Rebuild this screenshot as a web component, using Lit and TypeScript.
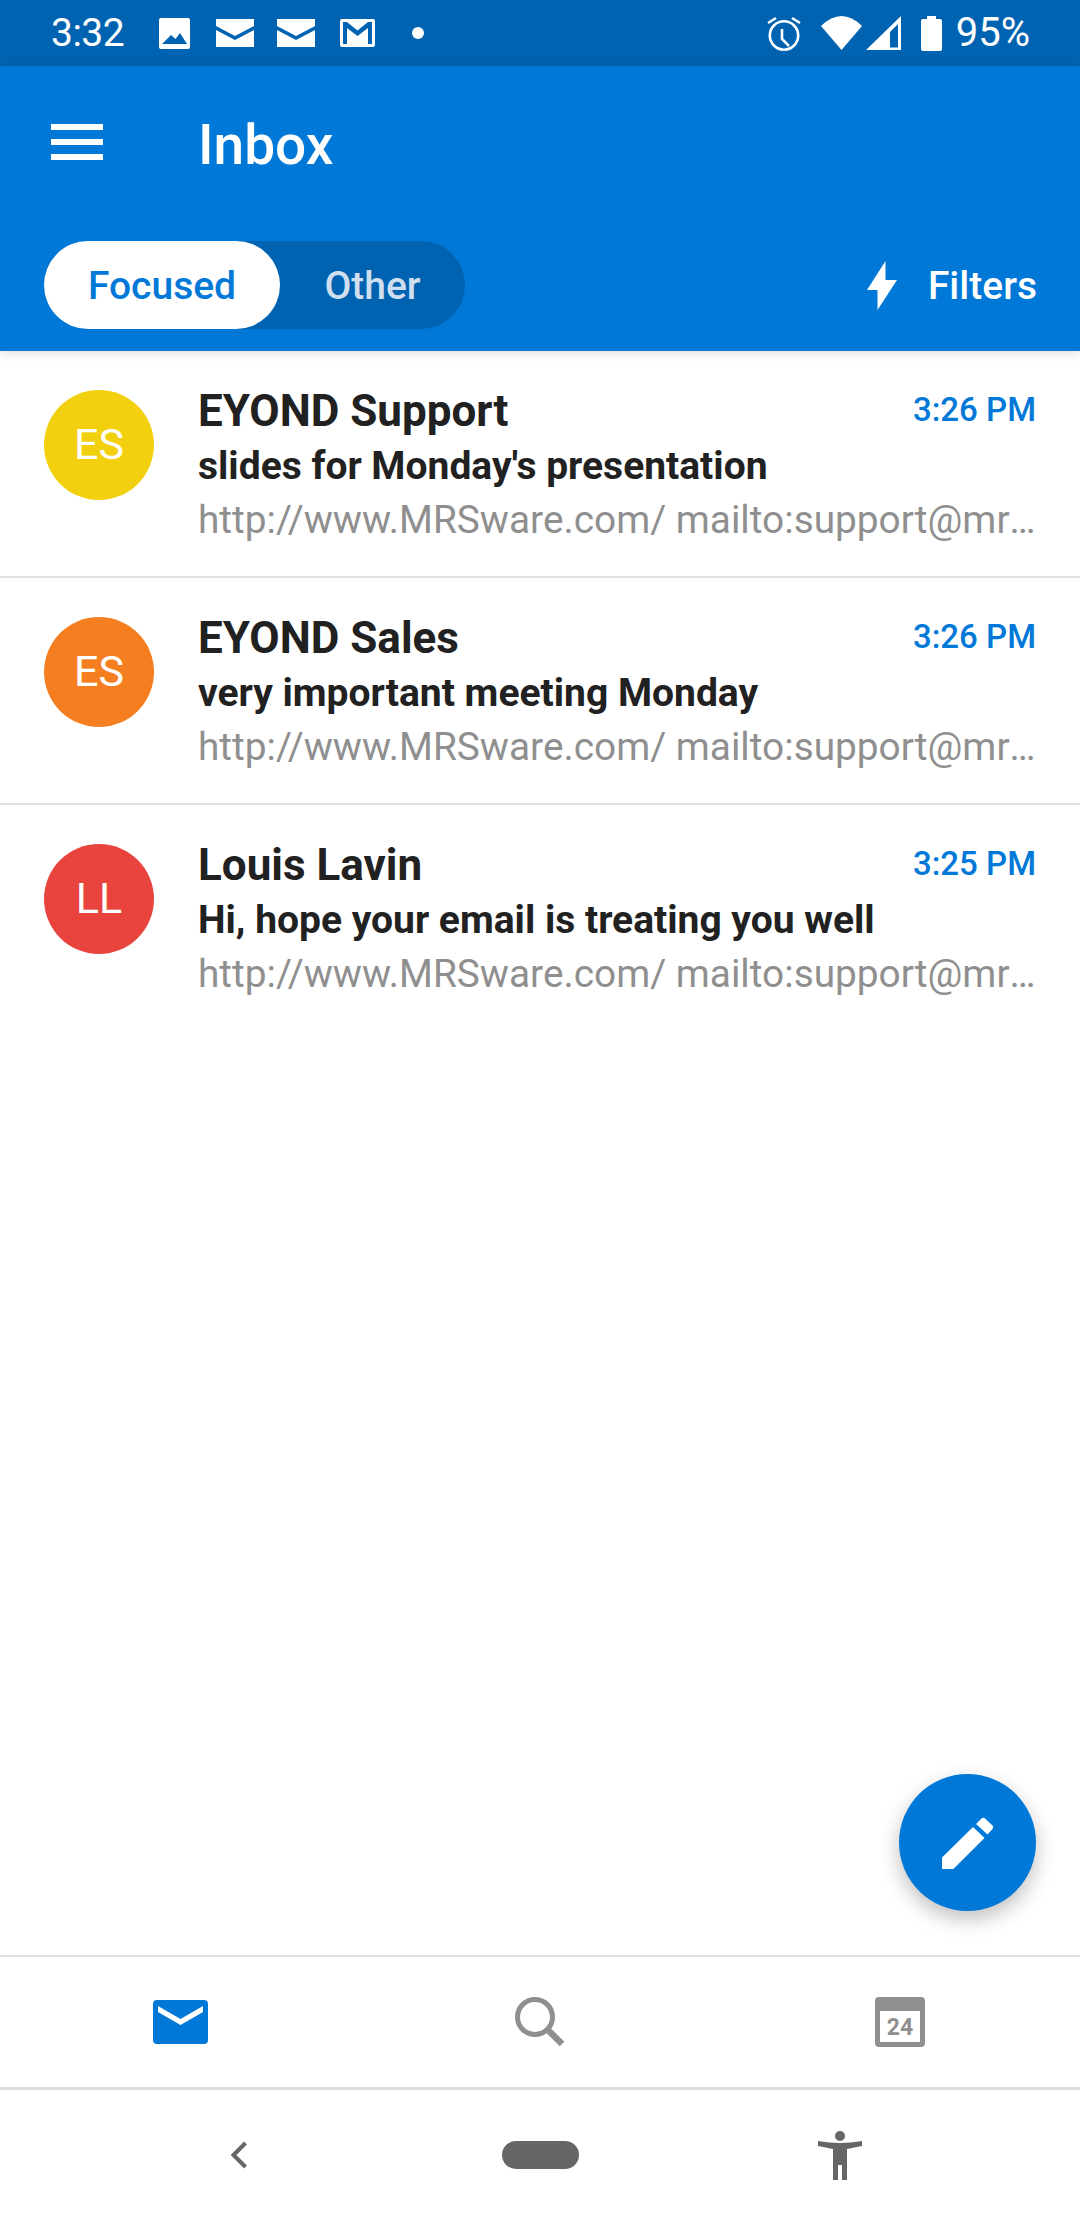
import { LitElement, html, css, svg } from 'lit';
import { customElement } from 'lit/decorators.js';

const mailGlyph = svg`<path fill-rule="evenodd" d="M0 0H38V7L19 17 0 7ZM0 11 19 21 38 11V28H0Z"/>`;

const messages = [
  { initials: 'ES', color: '#f2d00d', sender: 'EYOND Support', time: '3:26 PM', subject: "slides for Monday's presentation" },
  { initials: 'ES', color: '#f57f20', sender: 'EYOND Sales', time: '3:26 PM', subject: 'very important meeting Monday' },
  { initials: 'LL', color: '#e8443d', sender: 'Louis Lavin', time: '3:25 PM', subject: 'Hi, hope your email is treating you well' },
];

const preview = 'http://www.MRSware.com/ mailto:support@mrsware.com';

@customElement('app-root')
export class AppRoot extends LitElement {
  static styles = css`
    :host {
      display: flex;
      flex-direction: column;
      width: 1080px;
      height: 2220px;
      background: #fff;
      font-family: Roboto, sans-serif;
      overflow: hidden;
    }
    svg { display: block; flex: none; }

    .status {
      height: 66px;
      flex: none;
      display: flex;
      align-items: center;
      padding: 0 50px 0 51px;
      background: #0063b1;
      color: #fff;
      fill: #fff;
    }
    .status-time { font-size: 39px; width: 73px; line-height: 66px; letter-spacing: -0.5px; }
    .status-pic { margin-left: 35px; }
    .status-mail { margin-left: 26px; }
    .status-mail2 { margin-left: 23px; }
    .status-gmail { margin-left: 25px; }
    .status-dot { margin-left: 37px; }
    .status-alarm { margin-left: auto; }
    .status-wifi { margin-left: 19px; }
    .status-signal { margin-left: 4px; }
    .status-battery { margin-left: 20px; }
    .status-pct { margin-left: 14px; font-size: 40px; line-height: 66px; }

    .header {
      height: 285px;
      flex: none;
      display: flex;
      flex-direction: column;
      background: #0078d7;
      color: #fff;
      fill: #fff;
      box-shadow: 0 2px 10px rgba(0, 0, 0, 0.14);
      position: relative;
      z-index: 1;
    }
    .title-row {
      height: 175px;
      display: flex;
      align-items: flex-start;
      padding-left: 51px;
    }
    .menu { margin-top: 58px; }
    .title {
      margin: 43px 0 0 95px;
      font-size: 55px;
      font-weight: 500;
      line-height: 72px;
    }
    .tabs-row {
      display: flex;
      align-items: center;
      justify-content: space-between;
      padding: 0 43px 0 44px;
    }
    .tabs {
      width: 421px;
      height: 88px;
      display: flex;
      background: #0063b1;
      border-radius: 44px;
      font-size: 39px;
      font-weight: 500;
      line-height: 90px;
    }
    .tab-active {
      width: 236px;
      text-align: center;
      background: #fff;
      color: #0078d7;
      border-radius: 44px;
    }
    .tab-other { flex: 1; text-align: center; color: #cfdff0; }
    .filters {
      display: flex;
      align-items: center;
      gap: 31px;
      font-size: 39px;
      font-weight: 500;
      line-height: 54px;
    }
    .filters span { padding-top: 2px; }

    .list { flex: 1; position: relative; min-height: 0; }
    .row {
      height: 227px;
      box-sizing: border-box;
      display: flex;
      padding: 39px 44px 0;
      border-bottom: 2px solid #e1e1e1;
    }
    .row.last { border-bottom: none; }
    .avatar {
      width: 110px;
      height: 110px;
      flex: none;
      box-sizing: border-box;
      padding-bottom: 2px;
      border-radius: 50%;
      display: flex;
      align-items: center;
      justify-content: center;
      color: #fff;
      font-size: 43px;
      font-weight: 400;
    }
    .body { flex: 1; min-width: 0; margin-left: 44px; margin-top: -7px; }
    .top { display: flex; justify-content: space-between; align-items: center; height: 56px; }
    .sender { font-size: 44px; font-weight: 700; color: #212121; }
    .time { font-size: 33px; font-weight: 500; color: #0078d7; margin-bottom: 4px; }
    .subject { font-size: 39px; font-weight: 700; color: #212121; line-height: 54px; }
    .preview {
      font-size: 38.8px;
      color: #8f8f8f;
      line-height: 54px;
      white-space: nowrap;
      overflow: hidden;
      text-overflow: ellipsis;
    }
    .fab {
      position: absolute;
      right: 44px;
      bottom: 44px;
      width: 137px;
      height: 137px;
      border-radius: 50%;
      background: #0078d7;
      fill: #fff;
      display: flex;
      align-items: center;
      justify-content: center;
      box-shadow: 0 8px 20px rgba(0, 0, 0, 0.25);
    }

    .tabbar {
      height: 132px;
      flex: none;
      box-sizing: border-box;
      display: grid;
      grid-template-columns: repeat(3, 1fr);
      place-items: center;
      border-top: 2px solid #e1e1e1;
      fill: #8f8f8f;
    }
    .tab-mail { fill: #0078d7; }
    .navbar {
      height: 133px;
      flex: none;
      box-sizing: border-box;
      display: grid;
      grid-template-columns: repeat(3, 300px);
      padding: 0 90px;
      place-items: center;
      border-top: 3px solid #dedede;
      fill: #666;
    }
    .back { margin-right: 2px; }
    .home { width: 77px; height: 28px; border-radius: 14px; background: #666; }
  `;

  renderStatus() {
    return html`
      <div class="status">
        <span class="status-time">3:32</span>
        <svg class="status-pic" width="31" height="31" viewBox="0 0 31 31"><path fill-rule="evenodd" d="M2 0H29A2 2 0 0 1 31 2V29A2 2 0 0 1 29 31H2A2 2 0 0 1 0 29V2A2 2 0 0 1 2 0ZM3 26H28L21 15 16.500 21 12 17Z"/></svg>
        <svg class="status-mail" width="38" height="28" viewBox="0 0 38 28">${mailGlyph}</svg>
        <svg class="status-mail2" width="38" height="28" viewBox="0 0 38 28">${mailGlyph}</svg>
        <svg class="status-gmail" width="35" height="28" viewBox="0 0 35 28"><path fill-rule="evenodd" d="M2 0H33A2 2 0 0 1 35 2V26A2 2 0 0 1 33 28H2A2 2 0 0 1 0 26V2A2 2 0 0 1 2 0ZM7 3H3V25H7V9L17.500 17 28 9V25H32V3H28L17.500 11.500Z"/></svg>
        <svg class="status-dot" width="12" height="12" viewBox="0 0 12 12"><circle cx="6" cy="6" r="6"/></svg>
        <svg class="status-alarm" width="35" height="35" viewBox="0 0 35 35">
          <circle cx="17" cy="19.500" r="14.200" fill="none" stroke="#fff" stroke-width="2.600"/>
          <path d="M15 13V23L22 30M1 7 9 2M33 7 25 2" fill="none" stroke="#fff" stroke-width="2.600"/>
        </svg>
        <svg class="status-wifi" width="41" height="34" viewBox="0 0 41 34"><path d="M0 10Q20.500-10 41 10L20.500 34Z"/></svg>
        <svg class="status-signal" width="35" height="34" viewBox="0 0 35 34"><path fill-rule="evenodd" d="M35 0V34H0ZM24 16V31.500H32V8Z"/></svg>
        <svg class="status-battery" width="21" height="35" viewBox="0 0 21 35"><path d="M6 0H15V3H19A2 2 0 0 1 21 5V33A2 2 0 0 1 19 35H2A2 2 0 0 1 0 33V5A2 2 0 0 1 2 3H6Z"/></svg>
        <span class="status-pct">95%</span>
      </div>
    `;
  }

  renderHeader() {
    return html`
      <div class="header">
        <div class="title-row">
          <svg class="menu" width="52" height="36" viewBox="0 0 52 36"><path d="M0 0H52V6H0ZM0 15H52V21H0ZM0 30H52V36H0Z"/></svg>
          <span class="title">Inbox</span>
        </div>
        <div class="tabs-row">
          <div class="tabs">
            <div class="tab-active">Focused</div>
            <div class="tab-other">Other</div>
          </div>
          <div class="filters">
            <svg width="30" height="49" viewBox="0 0 30 49"><path d="M18.500 0 0 29H10.500V49L30 19H18.500Z"/></svg>
            <span>Filters</span>
          </div>
        </div>
      </div>
    `;
  }

  renderTabbar() {
    return html`
      <div class="tabbar">
        <svg class="tab-mail" width="55" height="44" viewBox="0 0 55 44"><path fill-rule="evenodd" d="M4 0H51A4 4 0 0 1 55 4V40A4 4 0 0 1 51 44H4A4 4 0 0 1 0 40V4A4 4 0 0 1 4 0ZM5 6V12L27.500 25 50 12V6L27.500 19Z"/></svg>
        <svg width="50" height="50" viewBox="0 0 50 50">
          <circle cx="20" cy="20" r="17.500" fill="none" stroke="#8f8f8f" stroke-width="5"/>
          <path d="M31 31 47 47" stroke="#8f8f8f" stroke-width="6.500"/>
        </svg>
        <svg width="50" height="50" viewBox="0 0 50 50">
          <path fill-rule="evenodd" d="M4 0H46A4 4 0 0 1 50 4V46A4 4 0 0 1 46 50H4A4 4 0 0 1 0 46V4A4 4 0 0 1 4 0ZM5 14V45H45V14Z"/>
          <text x="25" y="38" text-anchor="middle" font-family="Roboto" font-weight="700" font-size="23">24</text>
        </svg>
      </div>
    `;
  }

  renderNavbar() {
    return html`
      <div class="navbar">
        <svg class="back" width="18" height="28" viewBox="0 0 18 28"><path d="M15.500 2 3.500 14 15.500 26" fill="none" stroke="#666" stroke-width="4"/></svg>
        <div class="home"></div>
        <svg width="44" height="49" viewBox="0 0 44 49">
          <circle cx="22" cy="5" r="5"/>
          <path d="M0 10Q22 14 44 10V15L29 18V49H24V34H20V49H15V18L0 15Z"/>
        </svg>
      </div>
    `;
  }

  render() {
    return html`
      ${this.renderStatus()}
      ${this.renderHeader()}
      <div class="list">
        ${messages.map(
          (m, i) => html`
            <div class="row ${i === messages.length - 1 ? 'last' : ''}">
              <div class="avatar" style="background:${m.color}">${m.initials}</div>
              <div class="body">
                <div class="top">
                  <span class="sender">${m.sender}</span>
                  <span class="time">${m.time}</span>
                </div>
                <div class="subject">${m.subject}</div>
                <div class="preview">${preview}</div>
              </div>
            </div>
          `
        )}
        <div class="fab">
          <svg width="52" height="52" viewBox="0 0 52 52"><path d="M0 40.500 31 10 42.500 21 11.400 52H0ZM34 7 39.500 1.500Q41 0 43 1.500L50.500 8.500Q52 10 50.500 12L45.500 17.500Z"/></svg>
        </div>
      </div>
      ${this.renderTabbar()}
      ${this.renderNavbar()}
    `;
  }
}
